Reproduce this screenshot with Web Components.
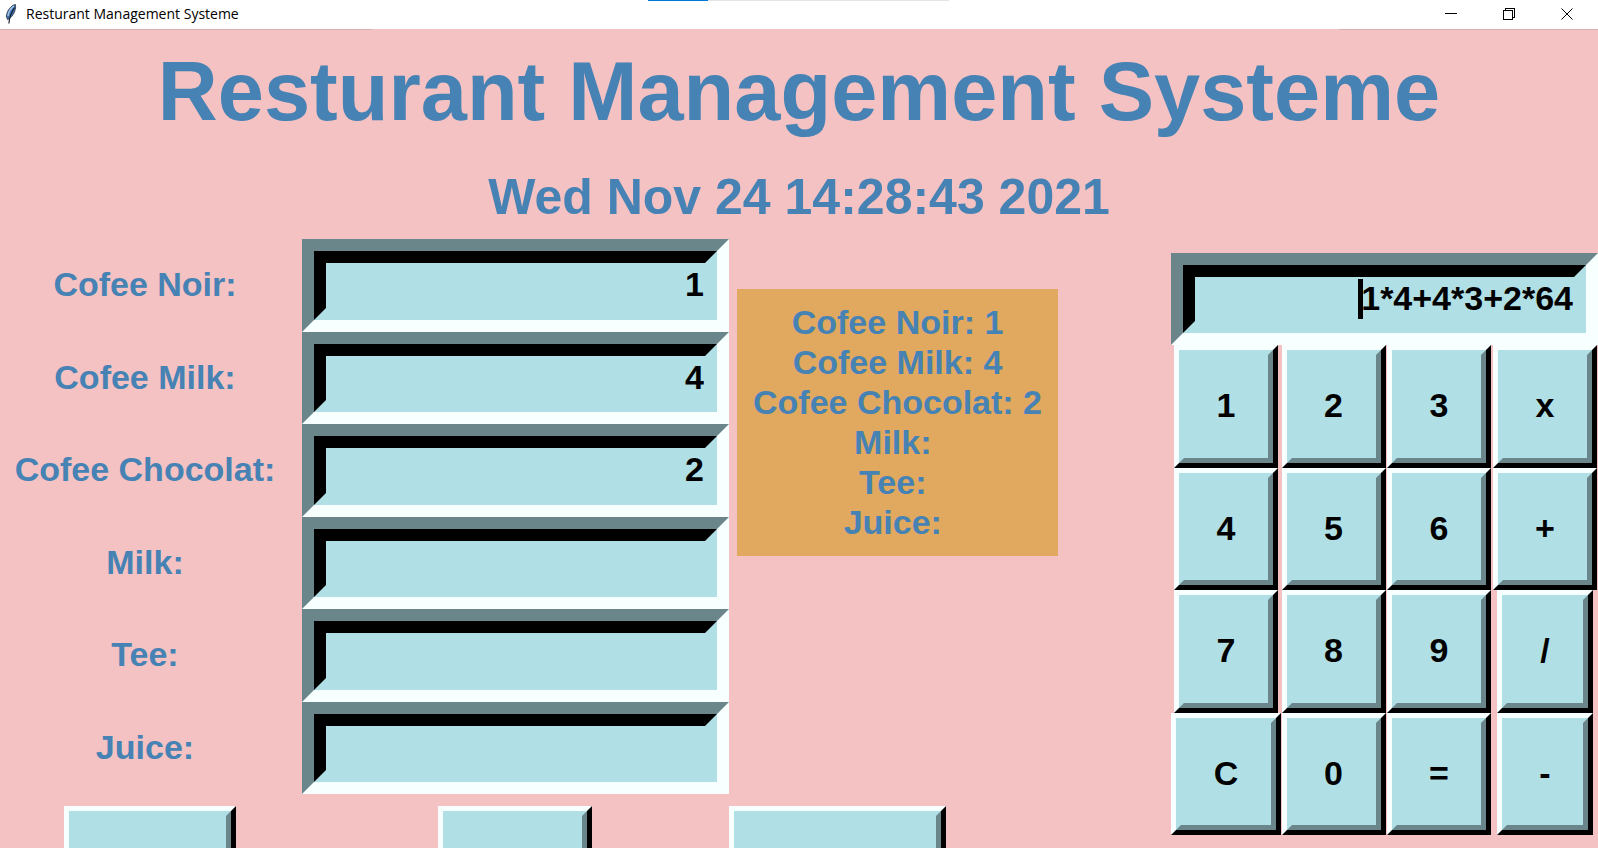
<!DOCTYPE html>
<html lang="en">
<head>
<meta charset="utf-8">
<meta name="viewport" content="width=device-width, initial-scale=1">
<title>Resturant Management Systeme</title>
<style>
:root {
  --page: #f4c2c2;
  --ink: #4682b4;
  --face: #b0e0e6;
  --light: #f7ffff;
  --shade: #6a868a;
  --bill: #e1a95f;
}
html, body { margin: 0; height: 100%; }
body { overflow: hidden; background: var(--page); font-family: "Liberation Sans", Arial, sans-serif; }
</style>
</head>
<body>
<restaurant-app></restaurant-app>
<script>
class BaseElement extends HTMLElement {
  render(html) {
    this.attachShadow({ mode: "open" }).innerHTML = html;
  }
}

class TitleBar extends BaseElement {
  connectedCallback() {
    this.render(`
      <style>
        :host { display: flex; align-items: center; box-sizing: border-box; height: 30px; padding: 0 2px 2px 5px; background:
          linear-gradient(#d8b0b0, #d8b0b0) left bottom / 372px 1px no-repeat,
          linear-gradient(#d8b0b0, #d8b0b0) right bottom / 259px 1px no-repeat,
          linear-gradient(var(--page), var(--page)) left bottom / 100% 1px no-repeat, #fff;
          position: relative; color: #000; }
        .feather { width: 12px; height: 20px; flex: none; }
        .name { flex: 1; margin-left: 9px; font: 14px/20px "Open Sans", "Noto Sans", sans-serif; }
        button { width: 58px; height: 28px; padding: 0; border: 0; background: none; display: grid; place-items: center; }
        button svg { width: 12px; height: 12px; fill: none; stroke: #000; shape-rendering: crispEdges; }
        .load { position: absolute; top: 0; left: calc(50% - 151px); width: 301px; height: 1px; background: linear-gradient(90deg, #0078d7 60px, #e5e5e5 60px); }
      </style>
      <svg class="feather" viewBox="0 0 12 20" aria-hidden="true">
        <path d="M10.400.400C6 1.400 2 6.500 1.300 12.200L2.500 15.600C7 13.600 9.900 9 10.600 3.500Z" fill="#3b6fae" stroke="#30343c" stroke-width=".8"/>
        <path d="M8.900 2.200C6 4.300 3.600 8 3 12" fill="none" stroke="#9fc4ea" stroke-width="1.500"/>
        <path d="M9.800 3.500C7 7 4.600 11 3.900 19.500" fill="none" stroke="#1a1f28" stroke-width="1.200"/>
      </svg>
      <span class="name"><slot></slot></span>
      <button aria-label="Minimize"><svg viewBox="0 0 12 12"><path d="M0 5.500H12"/></svg></button>
      <button aria-label="Restore"><svg viewBox="0 0 12 12"><path d="M.5 2.500H9.500V11.500H.5ZM2.500 2.500V.5H11.500V9.500H9.500"/></svg></button>
      <button aria-label="Close"><svg viewBox="0 0 12 12" style="shape-rendering:auto"><path d="M.5.5 11.500 11.500M11.500.5.5 11.500"/></svg></button>
      <span class="load"></span>`);
  }
}
customElements.define("title-bar", TitleBar);

class SunkenEntry extends BaseElement {
  connectedCallback() {
    const label = this.getAttribute("label");
    const caret = this.hasAttribute("caret") ? '<span class="caret"></span>' : "";
    this.render(`
      <style>
        :host { display: block; min-height: 92px; }
        .row { display: flex; align-items: stretch; height: 100%; }
        label { flex: 1; display: grid; place-items: center; padding: 0 12px 2px 0; color: var(--ink); font: bold 34px/40px "Liberation Sans", Arial, sans-serif; white-space: nowrap; }
        .frame { box-sizing: border-box; width: 427px; min-height: 92px; position: relative; display: flex; border: 12px solid; border-color: var(--shade) var(--light) var(--light) var(--shade); }
        input { box-sizing: border-box; flex: 1; min-width: 0; margin: 0; padding: 0 1px 2px; border: 12px solid; border-color: #000 var(--face) var(--face) #000; border-radius: 0; outline: 0; background: var(--face); color: #000; text-align: right; font: bold 34px/40px "Liberation Sans", Arial, sans-serif; }
        .caret { position: absolute; top: 14px; right: 223px; width: 5px; height: 40px; background: #000; }
      </style>
      <div class="row">
        ${label ? `<label for="field">${label}</label>` : ""}
        <div class="frame"><input id="field" type="text" value="${this.getAttribute("value") || ""}" ${label ? "" : 'aria-label="Calculation"'}>${caret}</div>
      </div>`);
  }
}
customElements.define("sunken-entry", SunkenEntry);

class RaisedButton extends BaseElement {
  connectedCallback() {
    const name = this.getAttribute("name");
    this.render(`
      <style>
        :host { display: block; width: 104px; }
        :host([size="wide"]) { width: 110px; }
        :host([size="narrow"]) { width: 96px; }
        :host([size="reset"]) { width: 154px; height: 123px; }
        :host([size="total"]) { width: 172px; height: 123px; }
        :host([size="action"]) { width: 217px; height: 123px; }
        button { display: flex; box-sizing: border-box; width: 100%; height: 100%; margin: 0; padding: 0; border: 5px solid; border-color: var(--light) #000 #000 var(--light); border-radius: 0; background: var(--face); color: #000; font: bold 34px/40px "Liberation Sans", Arial, sans-serif; }
        span { flex: 1; align-self: stretch; display: grid; place-items: center; padding-bottom: 2px; border: 5px solid; border-color: var(--face) var(--shade) var(--shade) var(--face); }
      </style>
      <button type="button" ${name ? `aria-label="${name}"` : ""}><span><slot></slot></span></button>`);
  }
}
customElements.define("raised-button", RaisedButton);

class OrderForm extends BaseElement {
  connectedCallback() {
    const items = [["Cofee Noir:", "1"], ["Cofee Milk:", "4"], ["Cofee Chocolat:", "2"], ["Milk:", ""], ["Tee:", ""], ["Juice:", ""]];
    this.render(`
      <style>
        :host { display: grid; grid-auto-rows: 1fr; width: 729px; min-height: 555px; }
      </style>
      ${items.map(([l, v]) => `<sunken-entry label="${l}" value="${v}"></sunken-entry>`).join("")}`);
  }
}
customElements.define("order-form", OrderForm);

class OrderBill extends BaseElement {
  connectedCallback() {
    this.render(`
      <style>
        :host { display: block; padding: 13px 16px 14px; background: var(--bill); color: var(--ink); text-align: center; font-weight: bold; font-size: 34px; line-height: 40px; }
        div { white-space: pre; }
      </style>
      ${["Cofee Noir: 1", "Cofee Milk: 4", "Cofee Chocolat: 2", "Milk: ", "Tee: ", "Juice: "].map(t => `<div>${t}</div>`).join("")}`);
  }
}
customElements.define("order-bill", OrderBill);

class CalcPad extends BaseElement {
  connectedCallback() {
    const sizes = { C: "wide", "/": "narrow", "-": "narrow" };
    const keys = ["1", "2", "3", "x", "4", "5", "6", "+", "7", "8", "9", "/", "C", "0", "=", "-"];
    this.render(`
      <style>
        :host { display: block; width: 427px; }
        .keys { display: grid; grid-template-columns: 110px 105px 106px 106px; grid-auto-rows: 1fr; justify-items: center; min-height: 490px; }
      </style>
      <sunken-entry value="1*4+4*3+2*64" caret></sunken-entry>
      <div class="keys">${keys.map(k => `<raised-button size="${sizes[k] || "key"}">${k}</raised-button>`).join("")}</div>`);
  }
}
customElements.define("calc-pad", CalcPad);

class RestaurantApp extends BaseElement {
  connectedCallback() {
    this.render(`
      <style>
        :host { display: block; height: 100vh; overflow: hidden; background: var(--page); color: var(--ink); }
        header { text-align: center; font-weight: bold; white-space: nowrap; }
        h1 { margin: 0; padding-top: 14px; font-size: 83px; line-height: 96px; }
        p { margin: 0; padding: 28px 0 12px; font-size: 50px; line-height: 59px; }
        main { display: flex; align-items: flex-start; }
        .bill { flex: 1; display: flex; padding: 50px 8px 0; }
        calc-pad { margin-top: 14px; }
        .left { display: grid; gap: 12px; }
        footer { display: grid; grid-template-columns: 300px 429px 217px; justify-items: center; width: 729px; height: 123px; }
      </style>
      <title-bar>Resturant Management Systeme</title-bar>
      <header>
        <h1>Resturant Management Systeme</h1>
        <p>Wed Nov 24 14:28:43 2021</p>
      </header>
      <main>
        <div class="left">
          <order-form></order-form>
          <footer>
            <raised-button size="total" name="Total"></raised-button>
            <raised-button size="reset" name="Reset"></raised-button>
            <raised-button size="action" name="Quit"></raised-button>
          </footer>
        </div>
        <div class="bill"><order-bill></order-bill></div>
        <calc-pad></calc-pad>
      </main>`);
  }
}
customElements.define("restaurant-app", RestaurantApp);
</script>
</body>
</html>
